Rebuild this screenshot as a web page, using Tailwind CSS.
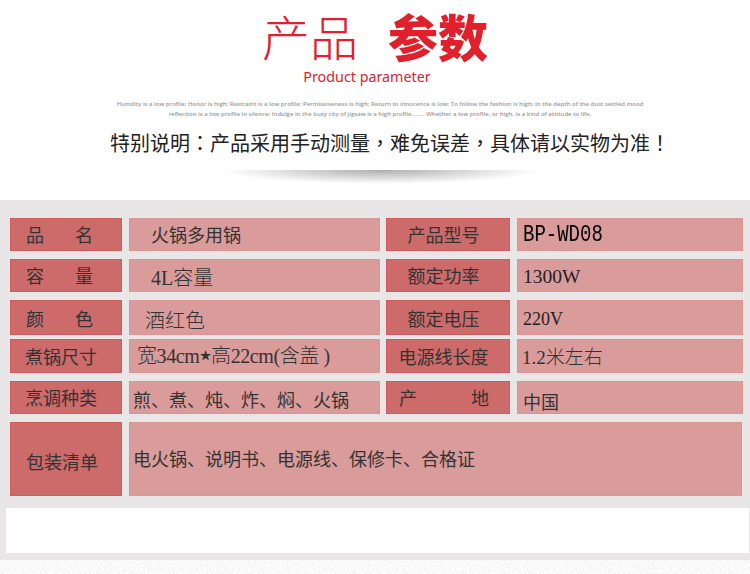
<!DOCTYPE html>
<html lang="zh">
<head>
<meta charset="utf-8">
<script src="https://cdn.jsdelivr.net/npm/@tailwindcss/browser@4"></script>
</head>
<body class="w-[750px] h-[574px] overflow-hidden bg-white font-['Noto_Sans_CJK_SC','Liberation_Sans',sans-serif] text-[#333]">
<header class="h-[200px] flex flex-col items-center">
  <h1 class="mt-[6px] h-[58px] flex items-center text-[#e0212c] leading-[58px] whitespace-nowrap">
    <span class="text-[48px] font-light">产品</span><span class="ml-[30px] text-[50px] font-black">参数</span>
  </h1>
  <p class="mt-[3px] mr-[16px] h-[20px] text-[#e0212c] text-[14.3px] leading-[20px] font-['Noto_Sans',sans-serif]">Product parameter</p>
  <div class="mt-[12px] ml-[10px] text-center text-[#999] text-[6px] leading-[10px] font-semibold font-['Open_Sans',sans-serif] whitespace-nowrap">
    <p>Humility is a low profile; Honor is high; Restraint is a low profile; Permissiveness is high; Return to innocence is low; To follow the fashion is high; In the depth of the dust settled mood</p>
    <p>reflection is a low profile in silence; Indulge in the busy city of jigsaw is a high profile........ Whether a low profile, or high, is a kind of attitude to life.</p>
  </div>
  <p lang="zh-TW" class="mt-[9px] ml-[30px] text-[20px] leading-[30px] text-[#222] whitespace-nowrap font-['Noto_Sans_CJK_TC',sans-serif]">特别说明：产品采用手动测量，难免误差，具体请以实物为准！</p>
  <div class="mt-[12px] ml-[12px] w-[320px] h-[14px] bg-[radial-gradient(ellipse_at_top,rgba(0,0,0,0.32),rgba(0,0,0,0)_70%)]"></div>
</header>
<main class="h-[360px] bg-[#e8e6e6]">
  <div class="pt-[18px] pl-[10px] flex flex-col">
    <div class="h-[33px] flex gap-[6px]">
      <div class="w-[112px] bg-[#cd6a6a] border border-[#d25a5a] text-[18px] leading-[31px] flex justify-between pl-[15px] pr-[28px]"><span>品</span><span>名</span></div>
      <div class="ml-px w-[251px] bg-[#da9b9b] shadow-[inset_0_0_0_1px_#df9292] text-[18px] leading-[33px] pl-[22px]">火锅多用锅</div>
      <div class="w-[124px] bg-[#cd6a6a] border border-[#d25a5a] text-[18px] leading-[31px] text-center pr-[9px]">产品型号</div>
      <div class="ml-px w-[226px] bg-[#da9b9b] shadow-[inset_0_0_0_1px_#df9292] text-[19px] leading-[35px] pl-[6px] text-black font-['Liberation_Mono',monospace]"><span class="inline-block scale-y-[1.25]">BP-WD08</span></div>
    </div>
    <div class="mt-[8px] h-[33px] flex gap-[6px]">
      <div class="w-[112px] bg-[#cd6a6a] border border-[#d25a5a] text-[18px] leading-[31px] flex justify-between pl-[15px] pr-[28px]"><span>容</span><span>量</span></div>
      <div class="ml-px w-[251px] bg-[#da9b9b] shadow-[inset_0_0_0_1px_#df9292] text-[20px] font-light leading-[38px] pl-[22px] font-['Liberation_Serif','Noto_Sans_CJK_SC',serif]">4L容量</div>
      <div class="w-[124px] bg-[#cd6a6a] border border-[#d25a5a] text-[18px] leading-[31px] text-center pr-[9px]">额定功率</div>
      <div class="ml-px w-[226px] bg-[#da9b9b] shadow-[inset_0_0_0_1px_#df9292] text-[19.5px] leading-[35px] pl-[6px] font-['Liberation_Serif',serif] text-[#222]">1300W</div>
    </div>
    <div class="mt-[8px] h-[35px] flex gap-[6px]">
      <div class="w-[112px] bg-[#cd6a6a] border border-[#d25a5a] text-[18px] leading-[35px] flex justify-between pl-[15px] pr-[28px]"><span>颜</span><span>色</span></div>
      <div class="ml-px w-[251px] bg-[#da9b9b] shadow-[inset_0_0_0_1px_#df9292] text-[20px] font-light leading-[39px] pl-[16px]">酒红色</div>
      <div class="w-[124px] bg-[#cd6a6a] border border-[#d25a5a] text-[18px] leading-[35px] text-center pr-[9px]">额定电压</div>
      <div class="ml-px w-[226px] bg-[#da9b9b] shadow-[inset_0_0_0_1px_#df9292] text-[18px] leading-[39px] pl-[6px] font-['Liberation_Serif',serif] text-[#222]">220V</div>
    </div>
    <div class="mt-[4px] h-[34px] flex gap-[6px]">
      <div class="w-[112px] bg-[#cd6a6a] border border-[#d25a5a] text-[18px] leading-[33px] pl-[14px] whitespace-nowrap">煮锅尺寸</div>
      <div class="ml-px w-[251px] bg-[#da9b9b] shadow-[inset_0_0_0_1px_#df9292] text-[20px] font-light leading-[34px] pl-[8px] whitespace-nowrap font-['Liberation_Serif','Noto_Sans_CJK_SC',serif] tracking-[-0.4px]">宽34cm<span class="text-[12px] align-[3px]">★</span>高22cm(含盖 )</div>
      <div class="w-[124px] bg-[#cd6a6a] border border-[#d25a5a] text-[18px] leading-[33px] text-center whitespace-nowrap pr-[9px]">电源线长度</div>
      <div class="ml-px w-[226px] bg-[#da9b9b] shadow-[inset_0_0_0_1px_#df9292] text-[19px] font-light leading-[38px] pl-[5px] font-['Liberation_Serif','Noto_Sans_CJK_SC',serif]">1.2米左右</div>
    </div>
    <div class="mt-[8px] h-[33px] flex gap-[6px]">
      <div class="w-[112px] bg-[#cd6a6a] border border-[#d25a5a] text-[18px] leading-[31px] pl-[14px] whitespace-nowrap">烹调种类</div>
      <div class="ml-px w-[251px] bg-[#da9b9b] shadow-[inset_0_0_0_1px_#df9292] text-[18px] leading-[37px] pl-[4px] whitespace-nowrap">煎、煮、炖、炸、焖、火锅</div>
      <div class="w-[124px] bg-[#cd6a6a] border border-[#d25a5a] text-[18px] leading-[31px] flex justify-between pl-[12px] pr-[20px]"><span>产</span><span>地</span></div>
      <div class="ml-px w-[226px] bg-[#da9b9b] shadow-[inset_0_0_0_1px_#df9292] text-[18px] leading-[40px] pl-[6px]">中国</div>
    </div>
    <div class="mt-[8px] h-[74px] flex gap-[6px]">
      <div class="w-[112px] bg-[#cd6a6a] border border-[#d25a5a] text-[18px] leading-[76px] pl-[15px] whitespace-nowrap">包装清单</div>
      <div class="ml-px w-[613px] bg-[#da9b9b] shadow-[inset_0_0_0_1px_#df9292] text-[18px] leading-[72px] pl-[4px] whitespace-nowrap">电火锅、说明书、电源线、保修卡、合格证</div>
    </div>
  </div>
  <div class="mt-[12px] ml-[6px] w-[743px] h-[45px] bg-white"></div>
</main>
<footer class="h-[14px] bg-[#f6f6f6]">
  <svg class="block" width="750" height="14" aria-hidden="true">
    <filter id="grain"><feTurbulence type="fractalNoise" baseFrequency="0.7" numOctaves="2" seed="4"/><feColorMatrix type="matrix" values="0 0 0 0 0.5  0 0 0 0 0.5  0 0 0 0 0.5  0.5 0 0 0 -0.17"/></filter>
    <rect width="750" height="14" fill="#fff"/>
    <rect width="750" height="14" filter="url(#grain)"/>
  </svg>
</footer>
</body>
</html>
